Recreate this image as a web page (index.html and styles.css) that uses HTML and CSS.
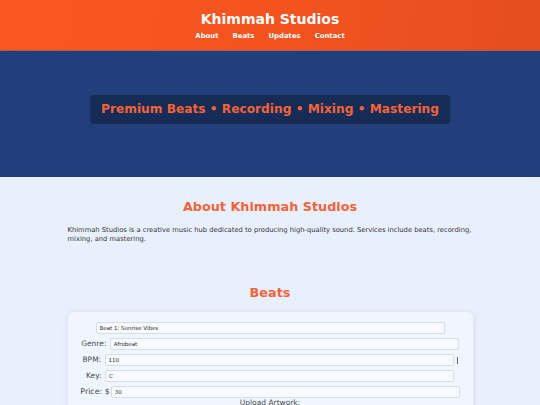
FILE: index.html
```html
<!DOCTYPE html>
<html lang="en">
<head>
<meta charset="utf-8">
<title>Khimmah Studios</title>
<link rel="stylesheet" href="styles.css">
</head>
<body>
<header class="site-header">
  <h1 class="brand">Khimmah Studios</h1>
  <nav class="nav">
    <a href="#about">About</a>
    <a href="#beats">Beats</a>
    <a href="#updates">Updates</a>
    <a href="#contact">Contact</a>
  </nav>
</header>
<section class="hero">
  <div class="badge">Premium Beats • Recording • Mixing • Mastering</div>
</section>
<main class="content">
  <section id="about" class="section">
    <h2 class="section-title">About Khimmah Studios</h2>
    <p class="about-text">Khimmah Studios is a creative music hub dedicated to producing high-quality sound. Services include beats, recording, mixing, and mastering.</p>
  </section>
  <section id="beats" class="section beats">
    <h2 class="section-title">Beats</h2>
    <div class="card">
      <div class="row"><input class="field field-title" type="text" value="Beat 1: Sunrise Vibes"></div>
      <div class="row"><label>Genre: </label><input class="field" type="text" value="Afrobeat"></div>
      <div class="row"><label>BPM: </label><input class="field" type="text" value="110"><span class="caret"></span></div>
      <div class="row"><label>Key: </label><input class="field" type="text" value="C"></div>
      <div class="row"><label class="price">Price: $</label><input class="field" type="text" value="30"></div>
      <div class="row upload">Upload Artwork:</div>
    </div>
  </section>
</main>
</body>
</html>
```
FILE: styles.css
```css
* { box-sizing: border-box; }
html, body { margin: 0; padding: 0; }
body {
  font-family: "DejaVu Sans", "Noto Sans", sans-serif;
  background: #e8f0fe;
  color: #333;
}
.site-header {
  background: linear-gradient(100deg, #fb5722 0%, #f2531f 55%, #e54d1f 100%);
  color: #fff;
  text-align: center;
  padding: 11px 0 8px;
  height: 51px;
  border-bottom: 1px solid #b55a4a;
}
.brand {
  margin: 0;
  font-size: 14px;
  font-weight: 700;
  line-height: 17px;
}
.nav {
  display: flex;
  justify-content: center;
  gap: 14px;
  margin-top: 4px;
}
.nav a {
  color: #fff;
  text-decoration: none;
  font-size: 6.9px;
  font-weight: 700;
}
.hero {
  background: #213f7b;
  height: 126px;
  display: flex;
  align-items: center;
  justify-content: center;
}
.badge {
  background: #172b57;
  color: #f2643a;
  font-weight: 700;
  font-size: 12.2px;
  padding: 7px 11px;
  border-radius: 4px;
  line-height: 15px;
  margin-top: -9px;
}
.content {
  width: 75%;
  margin: 0 auto;
}
.section-title {
  color: #f2643a;
  text-align: center;
  font-size: 12.8px;
  font-weight: 700;
  margin: 0;
  line-height: 16px;
}
#about { padding-top: 22px; }
.about-text {
  font-size: 6.75px;
  line-height: 9px;
  margin: 11px 0 0;
  color: #333;
}
.beats { padding-top: 41px; }
.card {
  margin-top: 11px;
  background: #f0f6ff;
  border-radius: 6px;
  box-shadow: 0 1px 6px rgba(60, 90, 150, 0.15);
  padding: 10px 10px 4px;
  text-align: center;
}
.row {
  font-size: 7.5px;
  line-height: 12px;
  margin-bottom: 4px;
  color: #4a4a4a;
  display: flex;
  justify-content: center;
  align-items: center;
}
.row label { white-space: pre; }
.row label.price { font-size: 7.9px; }
.field {
  width: 349px;
  height: 12px;
  border: 1px solid #d8dde6;
  border-radius: 2px;
  background: #f7f9fc;
  font-family: inherit;
  font-size: 5.5px;
  color: #333;
  padding: 0 3px;
  margin-left: 1px;
}
.field-title { margin-left: 0; }
.caret {
  display: inline-block;
  width: 1px;
  height: 7px;
  background: #666;
  margin-left: 3px;
}
.upload { margin-top: -4px; line-height: 10px; }
```
